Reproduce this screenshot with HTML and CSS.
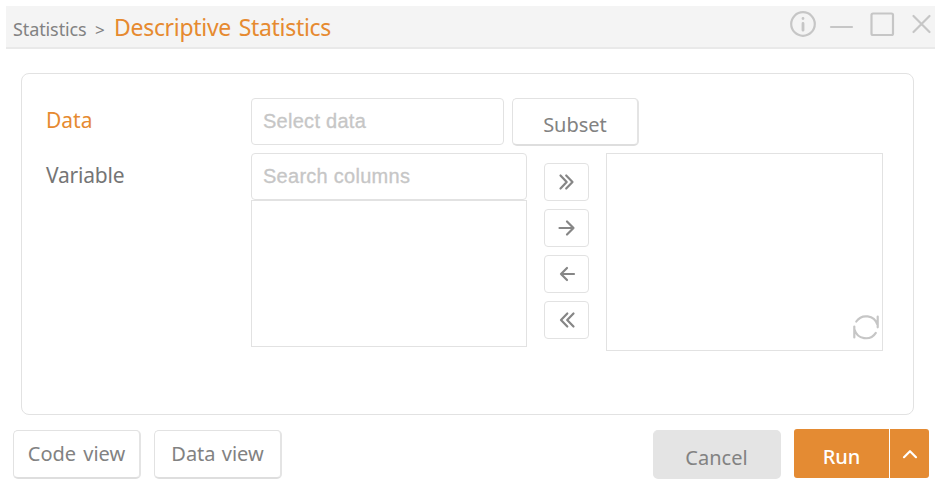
FILE: index.html
```html
<!DOCTYPE html>
<html lang="en">
<head>
<meta charset="utf-8">
<title>Descriptive Statistics</title>
<link rel="stylesheet" href="styles.css">
</head>
<body>
<div class="window">
  <header class="titlebar">
    <div class="crumbs">
      <span class="crumb-parent">Statistics</span>
      <span class="crumb-sep">&gt;</span>
      <h1 class="crumb-title">Descriptive Statistics</h1>
    </div>
    <svg class="controls" width="146" height="36" viewBox="788 6 146 36">
      <circle cx="803" cy="24" r="11.8"/>
      <path class="info-mark" d="M803 23.4V30.2M803 18.4V18.6"/>
      <path d="M831 27H852"/>
      <rect x="871.5" y="13.5" width="21.5" height="21.5" rx="1.5"/>
      <path d="M913.5 16L929.5 32M929.5 16L913.5 32"/>
    </svg>
  </header>
  <main class="panel">
    <div class="row">
      <label class="label label-active">Data</label>
      <div class="input input-data">Select data</div>
      <button class="btn btn-subset">Subset</button>
    </div>
    <div class="row">
      <label class="label label-variable">Variable</label>
      <div class="source">
        <div class="input input-search">Search columns</div>
        <div class="list"></div>
      </div>
      <div class="transfer">
        <button class="move"><svg viewBox="0 0 20 20"><path d="M3.5 3.5L9.7 10L3.5 16.5M9.2 3.5L15.5 10L9.2 16.5"/></svg></button>
        <button class="move"><svg viewBox="0 0 20 20"><path d="M2.5 10H16.5M10 3.5L16.5 10L10 16.5"/></svg></button>
        <button class="move"><svg viewBox="0 0 20 20"><path d="M17 10H4M10 4L4 10L10 16"/></svg></button>
        <button class="move"><svg viewBox="0 0 20 20"><path d="M10.3 3.5L4 10L10.3 16.5M16.5 3.5L10.2 10L16.5 16.5"/></svg></button>
      </div>
      <div class="target">
        <svg class="refresh" width="28" height="30" viewBox="852 312 28 30"><path d="M856.3 321.5A11.8 11.8 0 0 1 877.3 324.5M877.7 316.5V327.3M875.8 332.8A11.8 11.8 0 0 1 854.5 329.5M854.3 326.5V337.5"/></svg>
      </div>
    </div>
  </main>
  <footer class="footer">
    <button class="btn btn-code">Code view</button>
    <button class="btn btn-view">Data view</button>
    <button class="btn btn-cancel">Cancel</button>
    <div class="run-group">
      <button class="run">Run</button>
      <button class="run-more"><svg width="16" height="10" viewBox="0 0 16 10"><path d="M2 8.2L8 2.2L14 8.2"/></svg></button>
    </div>
  </footer>
</div>
</body>
</html>
```
FILE: styles.css
```css
* { box-sizing: border-box; }
body { margin: 0; background: #fff; color: #828282; font-family: "Noto Sans", "Open Sans", sans-serif; }
button { margin: 0; padding: 0; font: inherit; color: inherit; background: #fff; }
svg { display: block; fill: none; stroke: #c6c6c6; stroke-width: 2.2; stroke-linecap: round; stroke-linejoin: round; }
.info-mark { stroke-width: 2.8; }
.window { width: 940px; height: 488px; padding: 6px 5px 0 6px; }
.titlebar { display: flex; justify-content: space-between; height: 43px; padding: 0 1px 0 7px; background: #f4f4f4; border-bottom: 2px solid #e9e9e9; }
.crumbs { display: flex; align-items: baseline; height: 42px; line-height: 43px; white-space: nowrap; }
.crumb-parent { width: 82px; font-size: 18px; letter-spacing: -0.1px; }
.crumb-sep { width: 19px; font-size: 17px; }
.crumb-title { margin: 0; font-size: 23px; font-weight: 400; color: #e68a30; letter-spacing: -0.3px; word-spacing: 2px; }
.panel { width: 893px; height: 342px; margin: 24px 0 0 15px; padding: 24px 0 0 24px; border: 1px solid #e2e2e2; border-radius: 8px; }
.row { display: flex; align-items: flex-start; }
.row + .row { margin-top: 7px; }
.label { width: 205px; font-size: 21px; line-height: 44px; color: #757575; }
.label-active { color: #e68a30; }
.label-variable { letter-spacing: -0.2px; }
.input { height: 47px; padding-left: 11px; border: 1px solid #e2e2e2; border-radius: 4px; font-family: "Liberation Sans", sans-serif; font-size: 20px; letter-spacing: 0.27px; line-height: 44px; color: #c6c6c6; -webkit-text-stroke: 0.3px #c6c6c6; white-space: nowrap; }
.input-data { width: 253px; }
.source { width: 276px; }
.list { height: 147px; border: 1px solid #e2e2e2; }
.btn { width: 128px; height: 49px; border: 1px solid #e2e2e2; border-right: 2px solid #e4e4e4; border-bottom: 2px solid #dedede; border-radius: 5px; font-size: 20px; line-height: 46px; white-space: nowrap; }
.btn-subset { width: 127px; height: 48px; margin-left: 8px; padding-top: 7px; line-height: 36px; }
.transfer { display: grid; gap: 8px; margin: 10px 17px 0; }
.move { display: grid; place-items: center; width: 45px; height: 38px; border: 1px solid #e2e2e2; border-radius: 4px; }
.move svg { width: 20px; height: 20px; stroke: #868686; }
.target { display: flex; justify-content: flex-end; align-items: flex-end; width: 277px; height: 198px; padding: 0 2px 8px 0; border: 1px solid #e2e2e2; }
.footer { display: flex; margin: 14px 0 0 7px; padding-top: 1px; }
.btn-code { word-spacing: 2px; }
.btn-view { margin-left: 13px; word-spacing: 1px; }
.btn-cancel { margin-left: 371px; padding-top: 8px; background: #e4e4e4; border-color: #e4e4e4; line-height: 36px; }
.run-group { display: flex; gap: 1px; margin: -1px 0 0 13px; height: 49px; }
.run, .run-more { border: 0; background: #e48b33; color: #fff; }
.run { width: 95px; padding-top: 5px; border-radius: 3px 0 0 3px; font-size: 20px; font-weight: 500; }
.run-more { display: grid; place-items: center; width: 39px; border-radius: 0 3px 3px 0; }
.run-more svg { stroke: #fff; }
```
